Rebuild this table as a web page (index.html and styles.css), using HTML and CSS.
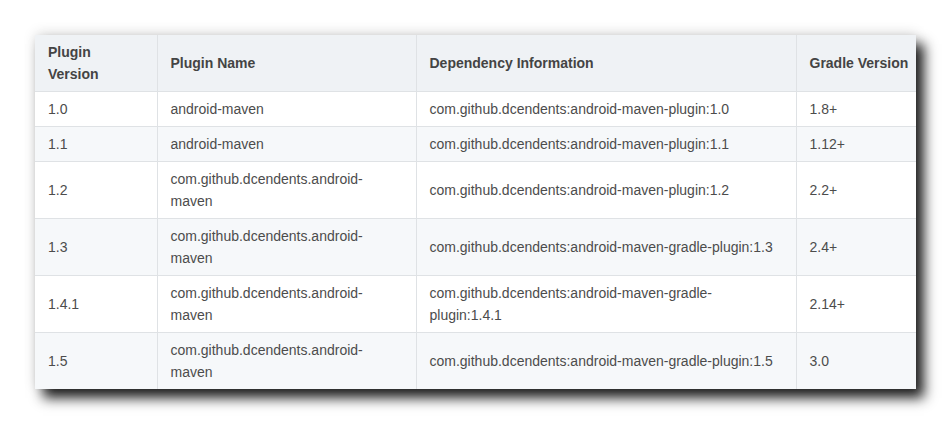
FILE: index.html
```html
<!DOCTYPE html>
<html>
<head>
<meta charset="utf-8">
<link rel="stylesheet" href="styles.css">
</head>
<body>
<div class="page">
<table class="versions">
<colgroup>
<col class="c1"><col class="c2"><col class="c3"><col class="c4">
</colgroup>
<thead>
<tr><th>Plugin Version</th><th>Plugin Name</th><th>Dependency Information</th><th>Gradle Version</th></tr>
</thead>
<tbody>
<tr><td>1.0</td><td>android-maven</td><td>com.github.dcendents:android-maven-plugin:1.0</td><td>1.8+</td></tr>
<tr><td>1.1</td><td>android-maven</td><td>com.github.dcendents:android-maven-plugin:1.1</td><td>1.12+</td></tr>
<tr><td>1.2</td><td>com.github.dcendents.android-maven</td><td>com.github.dcendents:android-maven-plugin:1.2</td><td>2.2+</td></tr>
<tr><td>1.3</td><td>com.github.dcendents.android-maven</td><td>com.github.dcendents:android-maven-gradle-plugin:1.3</td><td>2.4+</td></tr>
<tr><td>1.4.1</td><td>com.github.dcendents.android-maven</td><td>com.github.dcendents:android-maven-gradle-plugin:1.4.1</td><td>2.14+</td></tr>
<tr><td>1.5</td><td>com.github.dcendents.android-maven</td><td>com.github.dcendents:android-maven-gradle-plugin:1.5</td><td>3.0</td></tr>
</tbody>
</table>
</div>
</body>
</html>
```
FILE: styles.css
```css
html, body {
  margin: 0;
  padding: 0;
  background: #fff;
}
.page {
  padding: 35px;
}
.versions {
  border-collapse: collapse;
  table-layout: fixed;
  width: 881px;
  font-family: "Liberation Sans", Arial, sans-serif;
  font-size: 14px;
  line-height: 22px;
  color: #4c4c4c;
  background: #fff;
  box-shadow: 8px 9px 12px rgba(0, 0, 0, 0.88), 0 -2px 12px rgba(0, 0, 0, 0.12);
}
.c1 { width: 122px; }
.c2 { width: 259px; }
.c3 { width: 380px; }
.c4 { width: 120px; }
.versions th,
.versions td {
  border-right: 1px solid #dfe2e5;
  border-bottom: 1px solid #dfe2e5;
  padding: 6px 12px 6px 13px;
  text-align: left;
  vertical-align: middle;
}
.versions th:last-child,
.versions td:last-child {
  border-right: none;
  padding-right: 2px;
  white-space: nowrap;
}
.versions tbody tr:last-child td {
  border-bottom: none;
}
.versions th {
  background: #eff2f5;
  font-weight: bold;
  color: #444;
}
.versions tbody tr:nth-child(even) td {
  background: #f6f8fa;
}
```
